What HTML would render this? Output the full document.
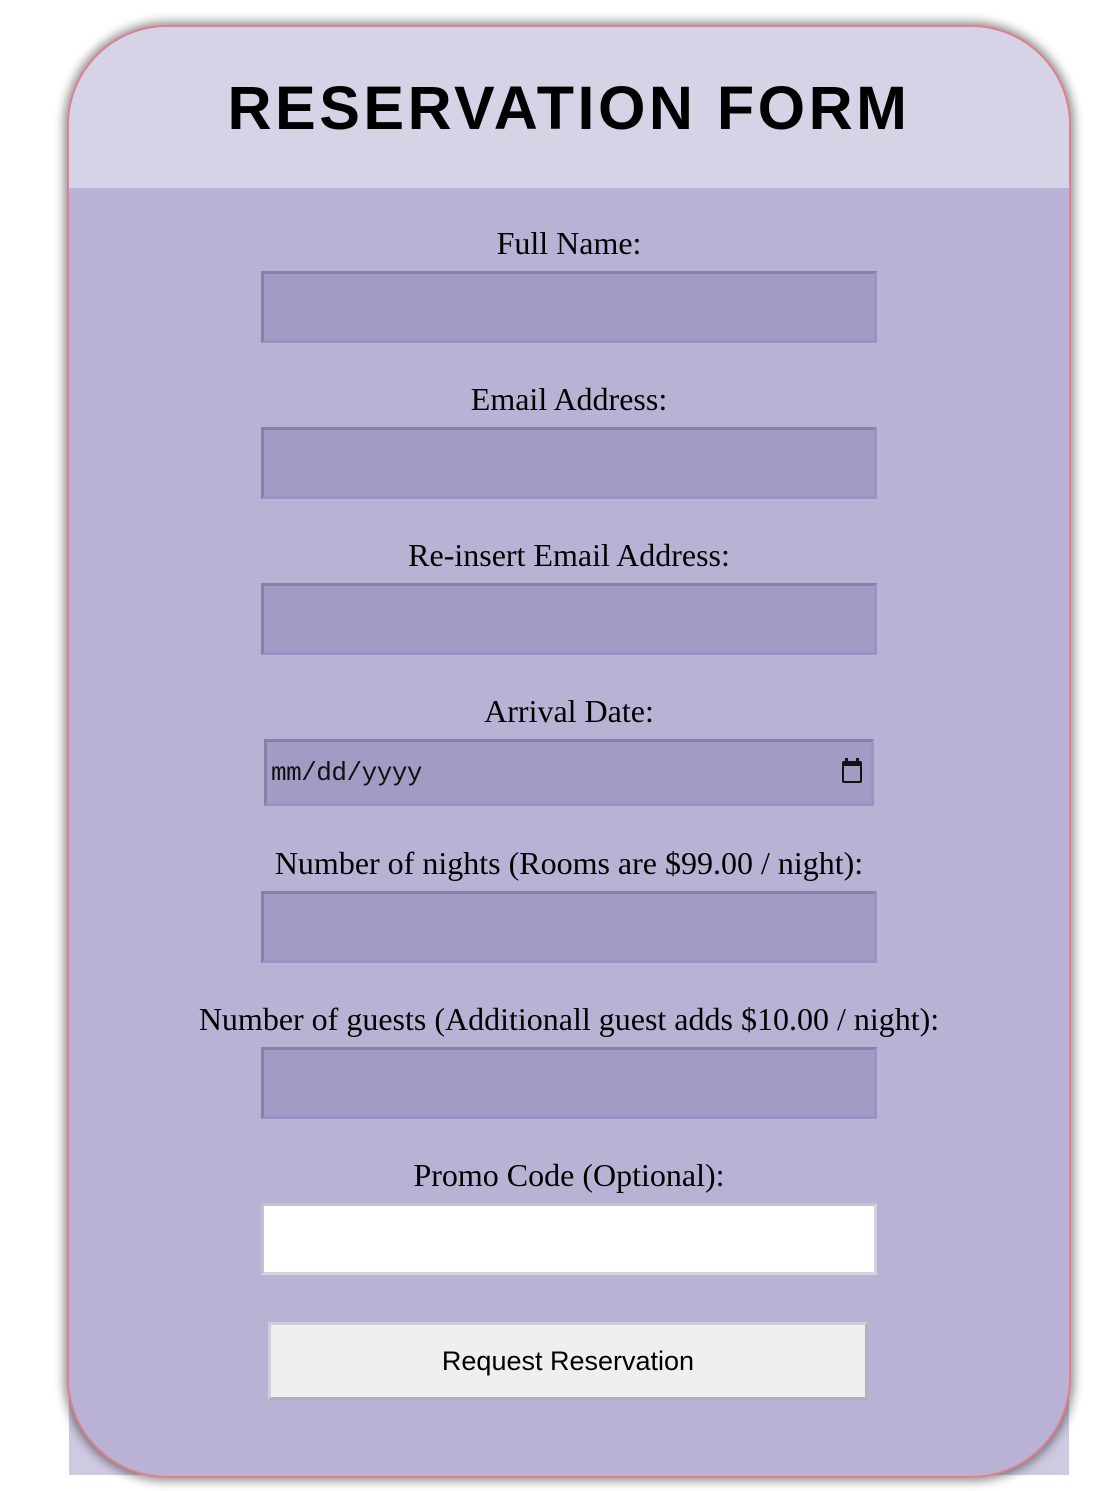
<!DOCTYPE html>
<html><head><style>
html,body{margin:0;padding:0;background:#fff;width:1118px;height:1491px;overflow:hidden}
.sq{position:absolute;left:69px;top:1380px;width:1000px;height:95px;background:#cfcae0}
.card{position:absolute;left:67px;top:25px;width:1000px;height:1449px;border:2px solid #e07f8f;border-radius:100px;background:#b9b2d4;overflow:hidden;box-shadow:0 0 10px 3px rgba(0,0,0,0.45)}
.hdr{position:absolute;left:0;top:0;width:100%;height:161px;background:#d7d3e7}
h1{position:absolute;left:0;width:100%;top:46px;margin:0;text-align:center;font:bold 61px "Liberation Sans",sans-serif;letter-spacing:3.5px;color:#000}
.lbl{position:absolute;left:0;width:100%;text-align:center;font:32px "Liberation Serif",serif;color:#000;line-height:34px}
.in{position:absolute;left:192px;width:610px;height:66px;background:#a39bc3;border:3px solid;border-color:#8880a6 #9c92c4 #9c92c4 #8880a6}
.date{left:195px;width:604px;height:61px}
.date span{position:absolute;left:4px;top:16px;font:26px "Liberation Mono",monospace;color:#111;letter-spacing:-0.5px}
.cal{position:absolute;right:9px;top:19px;width:20px;height:22px;border:2.5px solid #111;border-top-width:5px;border-radius:2px;box-sizing:border-box}
.cal:before,.cal:after{content:"";position:absolute;top:-8px;width:3px;height:4px;background:#111}
.cal:before{left:1px}.cal:after{right:1px}
.promo{background:#fff;border-color:#c5c1cf #d5d1e3 #d5d1e3 #c5c1cf}
.btn{position:absolute;left:199px;top:1295px;width:594px;height:72px;background:#efefef;border:3px solid;border-color:#d0ccdc #b3b0bc #b3b0bc #d0ccdc;text-align:center;font:27px "Liberation Sans",sans-serif;line-height:72px;color:#000}
</style></head><body>
<div class="sq"></div>
<div class="card">
<div class="hdr"></div>
<h1>RESERVATION FORM</h1>
<div class="lbl" style="top:199px">Full Name:</div>
<div class="in" style="top:244px"></div>
<div class="lbl" style="top:355px">Email Address:</div>
<div class="in" style="top:400px"></div>
<div class="lbl" style="top:511px">Re-insert Email Address:</div>
<div class="in" style="top:556px"></div>
<div class="lbl" style="top:667px">Arrival Date:</div>
<div class="in date" style="top:712px"><span>mm/dd/yyyy</span><div class="cal"></div></div>
<div class="lbl" style="top:819px">Number of nights (Rooms are $99.00 / night):</div>
<div class="in" style="top:864px"></div>
<div class="lbl" style="top:975px">Number of guests (Additionall guest adds $10.00 / night):</div>
<div class="in" style="top:1020px"></div>
<div class="lbl" style="top:1131px">Promo Code (Optional):</div>
<div class="in promo" style="top:1176px"></div>
<div class="btn">Request Reservation</div>
</div>
</body></html>
